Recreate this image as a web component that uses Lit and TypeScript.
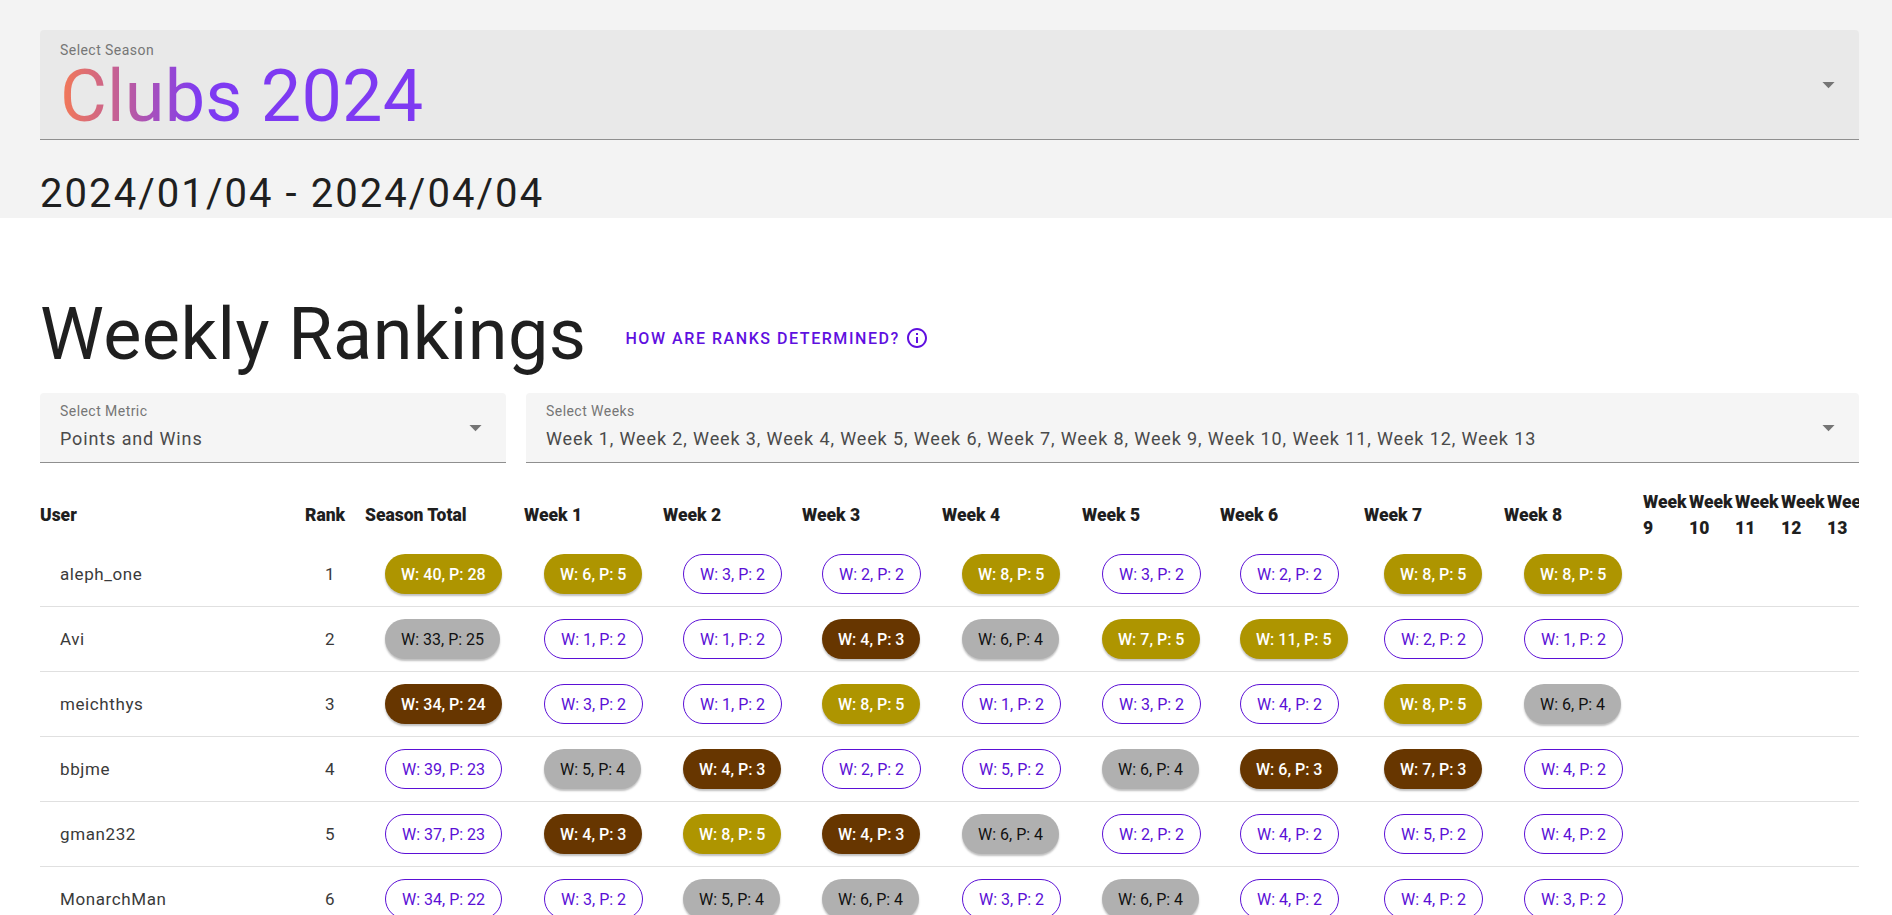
import { LitElement, html, css } from 'lit';
import { customElement } from 'lit/decorators.js';
import { classMap } from 'lit/directives/class-map.js';

type Tier = 'gold' | 'silver' | 'bronze' | 'plain';
type Cell = [number, number, Tier];

const g = (w: number, p: number): Cell => [w, p, 'gold'];
const s = (w: number, p: number): Cell => [w, p, 'silver'];
const b = (w: number, p: number): Cell => [w, p, 'bronze'];
const o = (w: number, p: number): Cell => [w, p, 'plain'];

const ROWS: { user: string; cells: Cell[] }[] = [
	{ user: 'aleph_one', cells: [g(40, 28), g(6, 5), o(3, 2), o(2, 2), g(8, 5), o(3, 2), o(2, 2), g(8, 5), g(8, 5)] },
	{ user: 'Avi', cells: [s(33, 25), o(1, 2), o(1, 2), b(4, 3), s(6, 4), g(7, 5), g(11, 5), o(2, 2), o(1, 2)] },
	{ user: 'meichthys', cells: [b(34, 24), o(3, 2), o(1, 2), g(8, 5), o(1, 2), o(3, 2), o(4, 2), g(8, 5), s(6, 4)] },
	{ user: 'bbjme', cells: [o(39, 23), s(5, 4), b(4, 3), o(2, 2), o(5, 2), s(6, 4), b(6, 3), b(7, 3), o(4, 2)] },
	{ user: 'gman232', cells: [o(37, 23), b(4, 3), g(8, 5), b(4, 3), s(6, 4), o(2, 2), o(4, 2), o(5, 2), o(4, 2)] },
	{ user: 'MonarchMan', cells: [o(34, 22), o(3, 2), s(5, 4), s(6, 4), o(3, 2), s(6, 4), o(4, 2), o(4, 2), o(3, 2)] },
];

const WEEKS = Array.from({ length: 8 }, (_, i) => `Week ${i + 1}`);
const NARROW = ['9', '10', '11', '12', '13'];
const WEEK_LIST = [1, 2, 3, 4, 5, 6, 7, 8, 9, 10, 11, 12, 13].map((n) => `Week ${n}`).join(', ');

@customElement('app-root')
export class AppRoot extends LitElement {
	private arrow() {
		return html`<svg class="arrow" viewBox="0 0 24 24"><path d="M7 10l5 5 5-5z"></path></svg>`;
	}

	render() {
		return html`
			<section class="band">
				<div class="select big">
					<div class="select-text">
						<div class="label">Select Season</div>
						<div class="season">Clubs 2024</div>
					</div>
					${this.arrow()}
				</div>
				<div class="dates">2024/01/04 - 2024/04/04</div>
			</section>
			<main class="content">
				<div class="title-row">
					<h2>Weekly Rankings</h2>
					<a class="how">
						<span>How are ranks determined?</span>
						<svg class="info" viewBox="0 0 24 24">
							<path d="M11 7h2v2h-2zm0 4h2v6h-2zm1-9C6.48 2 2 6.48 2 12s4.48 10 10 10 10-4.48 10-10S17.52 2 12 2zm0 18c-4.41 0-8-3.59-8-8s3.59-8 8-8 8 3.59 8 8-3.59 8-8 8z"></path>
						</svg>
					</a>
				</div>
				<div class="filters">
					<div class="select small metric">
						<div class="select-text">
							<div class="label">Select Metric</div>
							<div class="value">Points and Wins</div>
						</div>
						${this.arrow()}
					</div>
					<div class="select small weeks">
						<div class="select-text">
							<div class="label">Select Weeks</div>
							<div class="value">${WEEK_LIST}</div>
						</div>
						${this.arrow()}
					</div>
				</div>
				<div class="table">
					<div class="row head">
						<div>User</div>
						<div>Rank</div>
						<div>Season Total</div>
						${WEEKS.map((w) => html`<div>${w}</div>`)}
						${NARROW.map((n) => html`<div class="narrow">Week ${n}</div>`)}
					</div>
					${ROWS.map(
						(r, i) => html`<div class="row body">
							<div class="user">${r.user}</div>
							<div class="rank">${i + 1}</div>
							${r.cells.map(
								([w, p, tier]) => html`<div class="cell">
									<span class=${classMap({ chip: true, [tier]: true })}>W: ${w}, P: ${p}</span>
								</div>`
							)}
						</div>`
					)}
				</div>
			</main>
		`;
	}

	static styles = css`
		* {
			box-sizing: border-box;
		}

		:host {
			display: block;
			height: 915px;
			overflow: hidden;
			background: #fff;
			color: #1f1f1f;
			font-family: 'Roboto', 'Liberation Sans', sans-serif;
		}

		.band {
			height: 218px;
			padding: 30px 33px 0 40px;
			background: #f3f3f3;
		}

		.select {
			display: flex;
			align-items: center;
			justify-content: space-between;
			padding: 0 16px 0 20px;
			border-radius: 4px 4px 0 0;
			border-bottom: 1px solid #8f8f8f;
		}

		.select.big {
			height: 110px;
			background: #e9e9e9;
		}

		.select.small {
			height: 70px;
			background: #f5f5f5;
		}

		.big .select-text {
			padding-top: 12px;
		}

		.small .select-text {
			padding-top: 10px;
		}

		.select-text {
			align-self: flex-start;
			min-width: 0;
		}

		.label {
			font-size: 14px;
			line-height: 16px;
			letter-spacing: 0.45px;
			color: #767676;
		}

		.season {
			width: max-content;
			margin-top: 3px;
			font-size: 72px;
			font-weight: 400;
			line-height: 72px;
			letter-spacing: 0.2px;
			background: linear-gradient(90deg, #f47a56 0, #7e3af2 140px);
			-webkit-background-clip: text;
			background-clip: text;
			color: transparent;
		}

		.value {
			margin-top: 9px;
			font-size: 18px;
			line-height: 22px;
			letter-spacing: 0.88px;
			color: #4a4a4a;
			white-space: nowrap;
		}

		.arrow {
			width: 29px;
			height: 29px;
			flex: none;
			fill: #757575;
		}

		.dates {
			margin-top: 30px;
			font-size: 40px;
			line-height: 48px;
			letter-spacing: 2.07px;
		}

		.content {
			padding: 0 33px 0 40px;
		}

		.title-row {
			display: flex;
			align-items: center;
			gap: 39px;
			height: 72px;
			margin-top: 81px;
		}

		h2 {
			margin: 0;
			font-size: 72px;
			font-weight: 400;
			line-height: 72px;
			letter-spacing: 0.45px;
		}

		.how {
			display: flex;
			align-items: center;
			gap: 5px;
			margin-top: 6px;
			font-size: 16px;
			font-weight: 500;
			letter-spacing: 1.55px;
			text-transform: uppercase;
			color: #5f10e0;
		}

		.info {
			width: 24px;
			height: 24px;
			fill: #5f10e0;
		}

		.filters {
			display: grid;
			grid-template-columns: 466px 1fr;
			gap: 20px;
			margin-top: 22px;
		}

		.table {
			margin-top: 25px;
			overflow: hidden;
		}

		.row {
			display: grid;
			grid-template-columns: 265px 60px 159px 139px 139px 140px 140px 138px 144px 140px 139px 46px 46px 46px 46px 46px;
		}

		.head {
			align-items: center;
			height: 54px;
			font-size: 17.5px;
			font-weight: 900;
			line-height: 26px;
		}

		.narrow {
			width: 46px;
		}

		.body {
			align-items: center;
			height: 65px;
			border-bottom: 1px solid #e0e0e0;
			font-size: 17px;
			letter-spacing: 0.6px;
			color: #3a3a3a;
		}

		.user,
		.rank,
		.cell {
			padding-left: 20px;
		}

		.chip {
			display: inline-flex;
			align-items: center;
			height: 40px;
			padding: 0 16px;
			border-radius: 20px;
			font-size: 16px;
			letter-spacing: 0;
			white-space: nowrap;
		}

		.gold {
			background: #ae9500;
			color: #fff;
			font-weight: 500;
			box-shadow: 0 2px 2px rgba(0, 0, 0, 0.25);
		}

		.silver {
			background: #b0b0b0;
			color: #111;
			box-shadow: 0 2px 2px rgba(0, 0, 0, 0.25);
		}

		.bronze {
			background: #673600;
			color: #fff;
			font-weight: 500;
			box-shadow: 0 2px 2px rgba(0, 0, 0, 0.25);
		}

		.plain {
			border: 1px solid #5b10d6;
			color: #5b10d6;
			background: #fff;
		}
	`;
}
